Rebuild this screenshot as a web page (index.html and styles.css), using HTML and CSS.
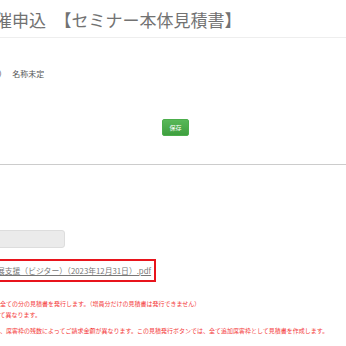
FILE: index.html
```html
<!DOCTYPE html>
<html lang="ja">
<head>
  <meta charset="UTF-8">
  <meta name="viewport" content="width=device-width, initial-scale=1.0">
  <title>開催申込 見積書</title>
  <link rel="stylesheet" href="styles.css">
</head>
<body>
  <!-- ページ見出し -->
  <div class="page-head">
    <h1>開催申込　【セミナー本体見積書】</h1>
  </div>

  <div class="event-name">
    <span class="event-no">（会場1）</span>
    <span>名称未定</span>
  </div>

  <div class="save-row">
    <button class="btn-save" type="button">保存</button>
  </div>

  <hr class="divider">

  <!-- 見積書 -->
  <div class="estimate">
    <div class="estimate-input"></div>
    <div class="file-box">
      <a href="#">セミナー出展支援（ビジター）（2023年12月31日）.pdf</a>
    </div>
  </div>

  <ul class="notes">
    <li>※本ボタンでは申込者全ての分の見積書を発行します。（増員分だけの見積書は発行できません）</li>
    <li>※金額は申込日によって異なります。</li>
    <li class="note-gap">※お申込みの時期及び、席客枠の残数によってご請求金額が異なります。この見積発行ボタンでは、全て追加席客枠として見積書を作成します。</li>
  </ul>
</body>
</html>
```

FILE: styles.css
```css
* {
  margin: 0;
  padding: 0;
  box-sizing: border-box;
}
body {
  font-family: "Noto Sans CJK JP", "Noto Sans", sans-serif;
  background-color: #fff;
  color: #555;
  overflow: hidden;
}

/* 見出し */
.page-head {
  padding-top: 9px;
  padding-bottom: 7px;
  border-bottom: 1px solid #eee;
}
.page-head h1 {
  margin-left: -22px;
  font-size: 17px;
  line-height: 21px;
  font-weight: normal;
  color: #727272;
  white-space: nowrap;
}

.event-name {
  margin-top: 31px;
  margin-left: -30px;
  font-size: 8px;
  line-height: 10px;
  white-space: nowrap;
}
.event-no {
  margin-right: 4px;
}

/* 保存ボタン */
.save-row {
  display: flex;
  justify-content: center;
  padding-left: 5px;
  margin-top: 40px;
}
.btn-save {
  width: 27px;
  height: 17px;
  font-family: inherit;
  font-size: 6px;
  color: #fff;
  background: linear-gradient(#58b858, #3f9f3f);
  border: 1px solid #4cae4c;
  border-radius: 2px;
}

.divider {
  margin-top: 28px;
  border: none;
  border-top: 1px solid #ccc;
}

/* 見積書 */
.estimate {
  margin-top: 65px;
}
.estimate-input {
  margin-left: -40px;
  width: 105px;
  height: 18px;
  background-color: #ebebeb;
  border: 1px solid #ddd;
  border-radius: 3px;
}
.file-box {
  display: inline-block;
  margin-top: 11px;
  margin-left: -52px;
  padding: 4px 3px 4px 8px;
  border: 2px solid #e8141c;
  font-size: 7.8px;
  line-height: 11px;
  white-space: nowrap;
}
.file-box a {
  color: #777;
}

/* 注意書き */
.notes {
  list-style: none;
  margin-top: 16px;
  margin-left: -60px;
  font-size: 6px;
  line-height: 11px;
  color: #f43a3a;
  white-space: nowrap;
}
.note-gap {
  margin-top: 5px;
}
```
